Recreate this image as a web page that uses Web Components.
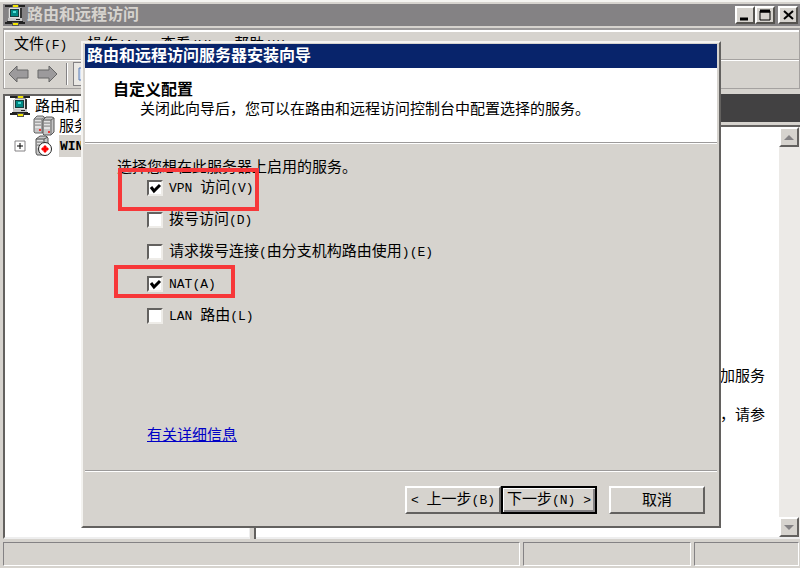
<!DOCTYPE html>
<html lang="zh-CN">
<head>
<meta charset="utf-8">
<title>路由和远程访问</title>
<style>
html, body{height:100%;}
body{
    margin:0;
    overflow:hidden;
    font:15px/20px "Liberation Sans", "Noto Sans CJK SC", sans-serif;
    color:#000;
    --face:#d6d3ce;
    --light:#f4f3f0;
    --shade:#848284;
    --dark:#424142;
}
.en{font-family:"Liberation Mono", monospace; font-size:13px; white-space:pre;}
</style>
</head>
<body>

<mmc-window>
    <title-bar slot="title">路由和远程访问</title-bar>
    <menu-item slot="menu">文件<span class="en">(F)</span></menu-item>
    <menu-item slot="menu">操作<span class="en">(A)</span></menu-item>
    <menu-item slot="menu">查看<span class="en">(V)</span></menu-item>
    <menu-item slot="menu">帮助<span class="en">(H)</span></menu-item>
    <tool-bar slot="tools"></tool-bar>
    <tree-item slot="tree" icon="network">路由和</tree-item>
    <tree-item slot="tree" icon="servers" level="1">服务</tree-item>
    <tree-item slot="tree" icon="stopped" level="1" expandable><span class="en">WIN</span></tree-item>
    <detail-pane slot="detail">
        <div>加服务</div>
        <div>，请参</div>
    </detail-pane>
    <status-bar slot="status"></status-bar>
</mmc-window>

<wizard-dialog>
    <span slot="caption">路由和远程访问服务器安装向导</span>
    <span slot="heading">自定义配置</span>
    <span slot="subtitle">关闭此向导后，您可以在路由和远程访问控制台中配置选择的服务。</span>
    <span slot="prompt">选择您想在此服务器上启用的服务。</span>
    <check-option checked marked="wide"><span class="en">VPN </span>访问<span class="en">(V)</span></check-option>
    <check-option>拨号访问<span class="en">(D)</span></check-option>
    <check-option>请求拨号连接<span class="en">(</span>由分支机构路由使用<span class="en">)(E)</span></check-option>
    <check-option checked marked="narrow"><span class="en">NAT(A)</span></check-option>
    <check-option><span class="en">LAN </span>路由<span class="en">(L)</span></check-option>
    <help-link slot="link">有关详细信息</help-link>
    <push-button slot="back"><span class="en">&lt; </span>上一步<span class="en">(B)</span></push-button>
    <push-button slot="back" default>下一步<span class="en">(N) &gt;</span></push-button>
    <push-button slot="cancel">取消</push-button>
</wizard-dialog>

<script>
const networkIcon = `<svg width="22" height="22" viewBox="0 0 22 22" shape-rendering="crispEdges">
    <path d="M1 2h20M1 19h20" stroke="#222" stroke-width="2"/>
    <path d="M8 0h6v3H8zM8 18h6v3H8z" fill="#f2e500" stroke="#555" stroke-width="1"/>
    <path d="M4 5l2-2h10l2 2v10l-2 2H6l-2-2z" fill="#999"/>
    <path d="M5 4h11v10H5z" fill="#ddd"/>
    <path d="M6 5h9v8H6z" fill="#173c3c"/>
    <path d="M7 6h7v6H7z" fill="#008984"/>
    <path d="M9 7h3v2H9z" fill="#4ee0d8"/>
    <path d="M16 4h2v12h-2z" fill="#333"/>
    <path d="M4 14h14v3H4z" fill="#c8c8c8"/>
    <path d="M3 17h16M12 15h4" stroke="#222"/>
</svg>`;

const serversIcon = `<svg width="22" height="22" viewBox="0 0 22 22">
    <path d="M1 4l3-3h6l2 2v13l-3 2H2l-1-1z" fill="#c6c6c6" stroke="#666"/>
    <path d="M1 4h8v14M9 4l3-2" fill="none" stroke="#777"/>
    <path d="M2 6h6M2 9h6M2 12h6" stroke="#fff"/>
    <path d="M2 7h6M2 10h6" stroke="#888"/>
    <path d="M10 5l3-3h6l2 1v14l-3 3h-7l-1-1z" fill="#c6c6c6" stroke="#555"/>
    <path d="M10 5h8v15M18 5l3-2" fill="none" stroke="#666"/>
    <path d="M11 7h6M11 10h6M11 13h6" stroke="#fff"/>
    <path d="M11 8h6M11 11h6" stroke="#888"/>
    <path d="M6 14h2v2H6zM15 16h2v2h-2z" fill="#e33"/>
</svg>`;

const stoppedIcon = `<svg width="22" height="22" viewBox="0 0 22 22">
    <path d="M3 4l4-3h6l2 2v14l-4 3H4l-1-2z" fill="#c6c6c6" stroke="#555"/>
    <path d="M3 4h8v14M11 4l4-2" fill="none" stroke="#555"/>
    <path d="M4 6h6M4 9h6M4 12h6" stroke="#fff"/>
    <path d="M4 7h6M4 10h6" stroke="#777"/>
    <circle cx="12" cy="14" r="6.5" fill="#fff" stroke="#222"/>
    <path d="M11 11h2v2h2v2h-2v2h-2v-2H9v-2h2z" fill="#f00" stroke="#f00"/>
</svg>`;

const icons = {network: networkIcon, servers: serversIcon, stopped: stoppedIcon};

function define(name, html, setup){
    const template = document.createElement('template');
    template.innerHTML = html;

    window.customElements.define(name, class extends HTMLElement{
        constructor(){
            super();
            this.attachShadow({mode:'open'});
            this.shadowRoot.appendChild(template.content.cloneNode(true));
            if(setup){
                setup(this, this.shadowRoot);
            }
        }
    });
}

define('mmc-window', `<style>
:host{
    display:flex;
    flex-direction:column;
    box-sizing:border-box;
    height:100vh;
    padding:4px 0 0 3px;
    background:var(--face);
    box-shadow:inset 0 2px var(--light);
}
.bars{margin-top:2px; border:1px solid #a5a2a0; border-top:2px solid #9c9a9a; box-shadow:inset 1px 2px #fff;}
nav{display:flex; gap:20px; height:29px; align-items:center; padding-left:10px;}
.tools{border-top:1px solid #a5a2a0; box-shadow:inset 0 1px #fff;}
main{flex:1; display:flex; gap:4px; min-height:0; margin-top:5px;}
.tree{flex:0 0 31%; box-sizing:border-box; background:#fff; border:2px solid #63615f; border-right:1px solid #eee; border-bottom:2px solid #eee; overflow:hidden;}
.detail{flex:1; display:flex; border-left:2px solid #63615f;}
::slotted(detail-pane){flex:1;}
</style>
<slot name="title"></slot>
<div class="bars">
    <nav><slot name="menu"></slot></nav>
    <div class="tools"><slot name="tools"></slot></div>
</div>
<main>
    <div class="tree"><slot name="tree"></slot></div>
    <div class="detail"><slot name="detail"></slot></div>
</main>
<slot name="status"></slot>`);

define('title-bar', `<style>
:host{display:flex; align-items:center; height:22px; padding:0 2px 0 1px; background:var(--shade); color:var(--face); font-size:16px; font-weight:bold;}
span{flex:1; padding-left:1px;}
svg{display:block;}
button{width:20px; height:18px; padding:0; background:var(--face); border:2px solid; border-color:#fff #55534f #55534f #fff;}
button:last-child{margin-left:3px;}
</style>
${networkIcon}
<span><slot></slot></span>
<button aria-label="最小化"><svg width="16" height="14"><path d="M3 11h8" stroke="#000" stroke-width="3"/></svg></button>
<button aria-label="最大化"><svg width="16" height="14"><path d="M3 3h10v9H3zM3 4h10" fill="none" stroke="#000" stroke-width="1"/><path d="M3 3h10" stroke="#000" stroke-width="3"/></svg></button>
<button aria-label="关闭"><svg width="16" height="14"><path d="M4 3l9 8M13 3l-9 8" stroke="#000" stroke-width="2"/></svg></button>`);

define('menu-item', `<style>
:host{display:block; white-space:nowrap;}
</style><slot></slot>`);

define('tool-bar', `<style>
:host{display:flex; align-items:center; height:28px; padding-left:4px; gap:8px;}
button{display:flex; padding:0; border:0; background:none;}
i{width:1px; height:22px; background:#848284; border-right:1px solid #fff;}
.up{width:20px; height:24px; padding:4px; box-sizing:border-box; margin-left:-3px; border:1px solid #848284; background:#eae8e4;}
</style>
<button aria-label="后退"><svg width="21" height="18"><path d="M1 9l8-8v4h11v8H9v4z" fill="#9c9a9c" stroke="#666"/></svg></button>
<button aria-label="前进"><svg width="21" height="18"><path d="M20 9l-8-8v4H1v8h11v4z" fill="#9c9a9c" stroke="#666"/></svg></button>
<i></i>
<button class="up" aria-label="显示树"><svg width="12" height="14"><path d="M1 1h10v12H1z" fill="#d6e2f5" stroke="#5a7db5"/></svg></button>`);

define('tree-item', `<style>
:host{display:flex; align-items:center; height:20px; padding-left:4px; white-space:nowrap;}
:host([level="1"]){padding-left:28px;}
:host([expandable]){padding-left:9px; font-weight:bold;}
.label{margin-left:4px;}
:host([expandable]) .label{padding:0 20px 0 1px; background:var(--face);}
.box{display:none; margin-right:7px;}
:host([expandable]) .box{display:block;}
.icon svg{display:block;}
</style>
<svg class="box" width="12" height="12"><path d="M1 1h10v10H1z" fill="#fff" stroke="#848284"/><path d="M3 6h6M6 3v6" stroke="#000"/></svg>
<span class="icon"></span>
<span class="label"><slot></slot></span>`, (host, root) => {
    root.querySelector('.icon').innerHTML = icons[host.getAttribute('icon')];
});

define('detail-pane', `<style>
:host{display:flex; flex-direction:column;}
header{height:28px; background:var(--dark);}
section{flex:1; display:flex; margin-top:3px; border-top:2px solid #63615f; border-bottom:2px solid #eee; background:#fff;}
.text{flex:1; display:flex; flex-direction:column; align-items:flex-end; gap:19px; padding:239px 14px 0 0;}
.scroll{display:flex; flex-direction:column; justify-content:space-between; width:21px; background:#eceae7;}
button{width:20px; height:20px; padding:0; background:var(--face); border:2px solid; border-color:#fff #63615f #63615f #fff;}
svg{display:block;}
</style>
<header></header>
<section>
    <div class="text"><slot></slot></div>
    <div class="scroll">
        <button aria-label="向上滚动"><svg width="16" height="16"><path d="M3 11l5-5 5 5z" fill="#848284"/></svg></button>
        <button aria-label="向下滚动"><svg width="16" height="16"><path d="M3 6l5 5 5-5z" fill="#848284"/></svg></button>
    </div>
</section>`);

define('status-bar', `<style>
:host{display:flex; gap:3px; padding:3px 1px 2px 0; background:var(--face);}
div{height:22px; border:1px solid; border-color:#848284 #fff #fff #848284;}
div:nth-of-type(1){flex:518;}
div:nth-of-type(2){flex:166;}
div:nth-of-type(3){flex:104;}
</style>
<div></div><div></div><div></div>`);

define('wizard-dialog', `<style>
:host{
    position:absolute;
    inset:41px 79px 40px 81px;
    display:flex;
    flex-direction:column;
    box-sizing:border-box;
    padding:1px 2px 2px;
    background:var(--face);
    border:2px solid;
    border-color:var(--light) #63615f #63615f var(--light);
}
h1{margin:0; padding-left:2px; background:#08246b; color:#fff; font-size:16px; line-height:24px;}
header{height:74px; box-sizing:border-box; padding:12px 28px; background:#fff;}
h2{margin:0; font-size:16px; line-height:20px;}
p{margin:0; line-height:20px;}
header p{padding-left:27px; line-height:18px;}
hr{width:100%; box-sizing:border-box; height:2px; margin:0; border:0; border-top:1px solid #9c9a9a; border-bottom:1px solid #fff;}
main{flex:1; padding:13px 32px 0; }
.options{display:flex; flex-direction:column; gap:12px; padding:1px 0 0 30px;}
.link{padding:99px 0 0 30px;}
footer{display:flex; justify-content:flex-end; gap:12px; padding:14px 12px 10px;}
footer div{display:flex;}
</style>
<h1><slot name="caption"></slot></h1>
<header>
    <h2><slot name="heading"></slot></h2>
    <p><slot name="subtitle"></slot></p>
</header>
<hr>
<main>
    <p><slot name="prompt"></slot></p>
    <div class="options"><slot></slot></div>
    <div class="link"><slot name="link"></slot></div>
</main>
<hr>
<footer>
    <div><slot name="back"></slot></div>
    <slot name="cancel"></slot>
</footer>`);

define('check-option', `<style>
:host{display:block; position:relative; width:fit-content;}
label{display:flex; align-items:center; gap:6px; height:20px; white-space:nowrap;}
input{
    appearance:none;
    width:16px;
    height:16px;
    margin:0;
    background:#fff;
    border:2px solid;
    border-color:#63615f #eeece8 #eeece8 #63615f;
}
.box{display:grid;}
.box > *{grid-area:1 / 1;}
svg{display:none; pointer-events:none;}
input:checked + svg{display:block;}
/* red highlight frame drawn over the row */
:host([marked])::after{content:""; position:absolute; border:4px solid #f73739; pointer-events:none;}
:host([marked="wide"])::after{inset:-10px -5px -13px -29px;}
:host([marked="narrow"])::after{inset:-9px -19px -4px -33px;}
</style>
<label>
    <span class="box"><input type="checkbox"><svg width="16" height="16"><path d="M4 7l3 4 6-6" fill="none" stroke="#000" stroke-width="3"/></svg></span>
    <span><slot></slot></span>
</label>`, (host, root) => {
    root.querySelector('input').checked = host.hasAttribute('checked');
});

define('help-link', `<style>
a{color:#0000c6; text-decoration:underline;}
</style><a href="#"><slot></slot></a>`);

define('push-button', `<style>
:host{display:block;}
button{
    box-sizing:border-box;
    width:96px;
    height:28px;
    padding:0;
    font:inherit;
    color:inherit;
    white-space:nowrap;
    background:var(--face);
    border:2px solid;
    border-color:#fff #63615f #63615f #fff;
}
:host([default]) button{border-color:#000; box-shadow:inset 1px 1px #fff, inset -2px -2px #848284;}
</style><button><slot></slot></button>`);
</script>
</body>
</html>
